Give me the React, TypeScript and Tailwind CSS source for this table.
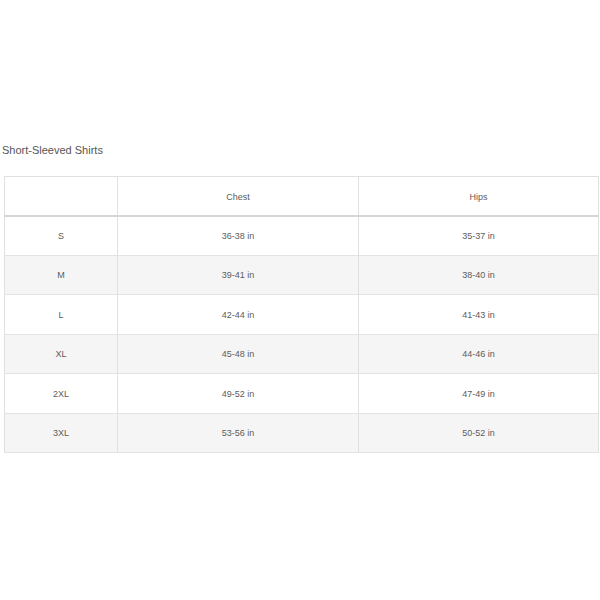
import React from "react";

const rows = [
  ["S", "36-38 in", "35-37 in"],
  ["M", "39-41 in", "38-40 in"],
  ["L", "42-44 in", "41-43 in"],
  ["XL", "45-48 in", "44-46 in"],
  ["2XL", "49-52 in", "47-49 in"],
  ["3XL", "53-56 in", "50-52 in"],
];

export default function App() {
  return (
    <div
      className="w-[600px] h-[600px] bg-white pt-[142px]"
      style={{ fontFamily: '"Liberation Sans", Arial, sans-serif' }}
    >
      <div className="pl-[2px] text-[11px] leading-[16px] text-[#555]">Short-Sleeved Shirts</div>
      <table className="ml-[4px] mt-[18px] w-[594px] table-fixed border-collapse border border-[#e0e0e0] text-[9px] text-[#5c5c5c]">
        <colgroup>
          <col className="w-[113px]" />
          <col className="w-[241px]" />
          <col className="w-[240px]" />
        </colgroup>
        <thead>
          <tr className="h-[39px] border-b-2 border-[#d6d6d6]">
            <th className="border-r border-[#e0e0e0] pt-[3px] font-normal"></th>
            <th className="border-r border-[#e0e0e0] pt-[3px] font-normal">Chest</th>
            <th className="pt-[3px] font-normal">Hips</th>
          </tr>
        </thead>
        <tbody>
          {rows.map((r, i) => (
            <tr
              key={r[0]}
              className={`h-[39.5px] border-b border-[#e3e3e3] ${i % 2 === 1 ? "bg-[#f5f5f5]" : "bg-white"}`}
            >
              <td className="border-r border-[#e0e0e0] pt-[2px] text-center">{r[0]}</td>
              <td className="border-r border-[#e0e0e0] pt-[2px] text-center">{r[1]}</td>
              <td className="pt-[2px] text-center">{r[2]}</td>
            </tr>
          ))}
        </tbody>
      </table>
    </div>
  );
}
